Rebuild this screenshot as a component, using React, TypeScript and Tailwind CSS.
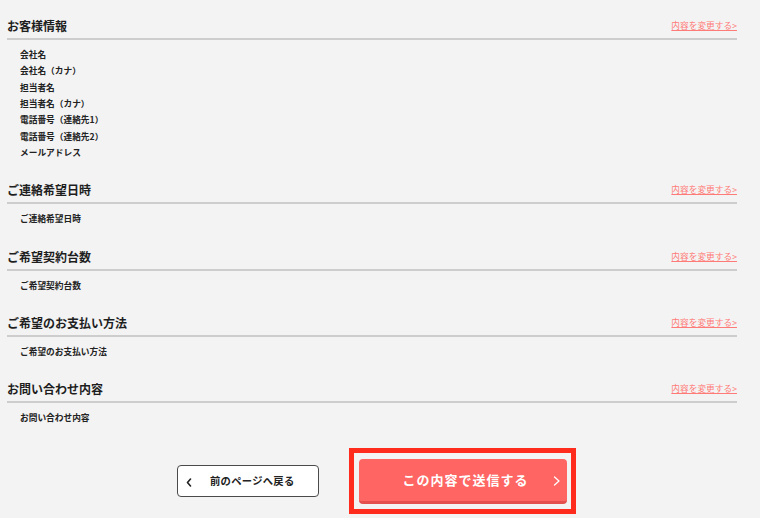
import React from "react";

type Section = { title: string; items: string[] };

const sections: Section[] = [
  {
    title: "お客様情報",
    items: [
      "会社名",
      "会社名（カナ）",
      "担当者名",
      "担当者名（カナ）",
      "電話番号（連絡先1）",
      "電話番号（連絡先2）",
      "メールアドレス",
    ],
  },
  { title: "ご連絡希望日時", items: ["ご連絡希望日時"] },
  { title: "ご希望契約台数", items: ["ご希望契約台数"] },
  { title: "ご希望のお支払い方法", items: ["ご希望のお支払い方法"] },
  { title: "お問い合わせ内容", items: ["お問い合わせ内容"] },
];

const font = {
  fontFamily: '"Noto Sans CJK JP", "Noto Sans", sans-serif',
};

export default function App() {
  return (
    <div className="w-[760px] h-[518px] overflow-hidden bg-[#f3f3f3]" style={font}>
      <div className="ml-[7px] w-[730px] pt-[17px] flex flex-col gap-[20px]">
        {sections.map((s) => (
          <section key={s.title}>
            <div className="flex items-end justify-between border-b-2 border-[#cdcdcd] pb-[3px]">
              <h2 className="text-[12px] leading-[18px] font-bold text-[#1e1e1e]">{s.title}</h2>
              <a className="text-[8.7px] leading-[14px] text-[#ff7b78] underline mb-[2px]" href="#">
                内容を変更する&gt;
              </a>
            </div>
            <ul className="pl-[13px] pt-[7px]">
              {s.items.map((it) => (
                <li key={it} className="text-[8.7px] leading-[16.33px] font-bold text-[#222]">
                  {it}
                </li>
              ))}
            </ul>
          </section>
        ))}
        <div className="flex items-center justify-center gap-[30px] pl-[9px] mt-[1px]">
          <button className="relative w-[142px] h-[32px] bg-white border border-[#4a4a4a] rounded-[4px] flex items-center">
            <svg className="absolute left-[8px] top-[12px]" width="6" height="9" viewBox="0 0 6 9">
              <path d="M4.5 1 L1.5 4.5 L4.5 8" fill="none" stroke="#222" strokeWidth="1.6" strokeLinecap="round" strokeLinejoin="round" />
            </svg>
            <span className="ml-[32px] text-[10.3px] font-bold text-[#222] tracking-[0.3px]">前のページへ戻る</span>
          </button>
          <div className="border-[5px] border-[#ff2b1d] pl-[5px] pr-[4px] pt-[6px] pb-[5px]">
            <button className="relative w-[208px] h-[45px] bg-[#ff6562] rounded-[4px] border-b-[3px] border-[#e4504d] flex items-center justify-center">
              <span className="text-[13px] font-bold text-white tracking-[1px] ml-[5px]">この内容で送信する</span>
              <svg className="absolute right-[6px] top-[17px]" width="8" height="10" viewBox="0 0 8 10">
                <path d="M1.5 1 L6 5 L1.5 9" fill="none" stroke="#ffffff" strokeWidth="1.3" strokeLinecap="round" strokeLinejoin="round" />
              </svg>
            </button>
          </div>
        </div>
      </div>
    </div>
  );
}
